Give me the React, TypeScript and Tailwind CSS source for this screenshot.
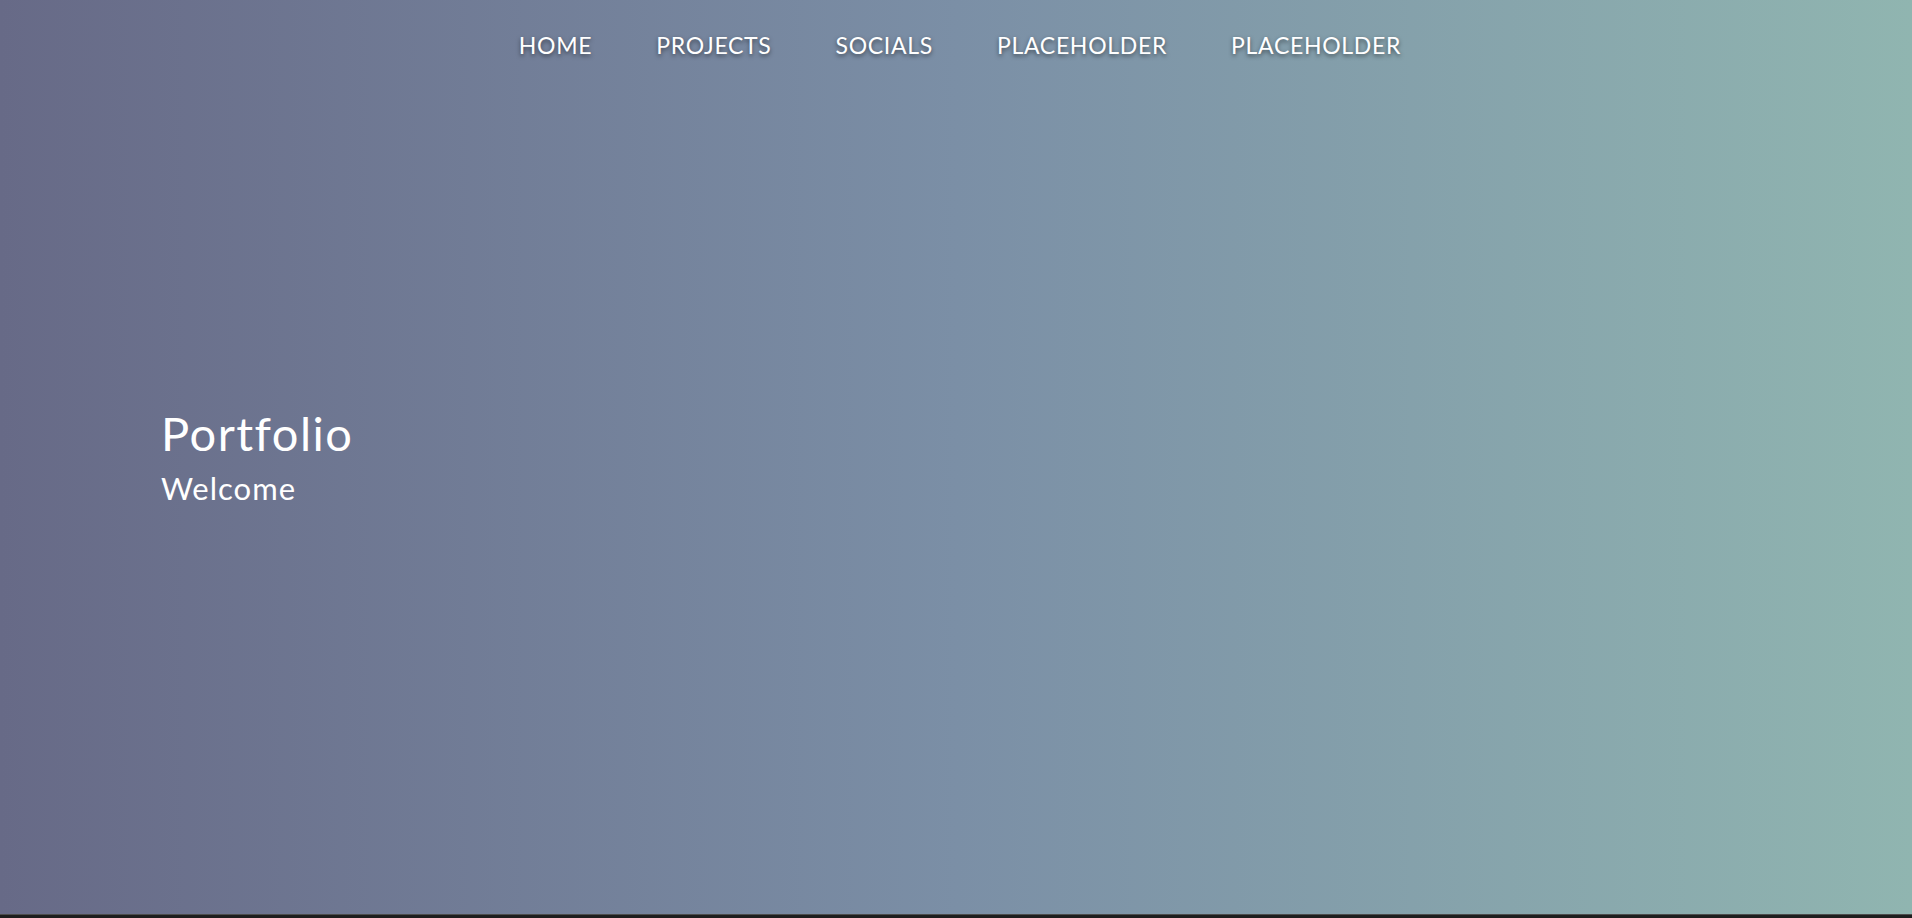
import React from "react";

const items = ["HOME", "PROJECTS", "SOCIALS", "PLACEHOLDER", "PLACEHOLDER"];

export default function App() {
  return (
    <div className="w-full h-[918px] bg-[#1e1e1e] overflow-hidden" style={{ fontFamily: "Lato, 'Noto Sans', sans-serif" }}>
      <div className="h-[915px] w-full bg-gradient-to-r from-[#676a87] via-[#7b8fa6] to-[#90b5b0] flex flex-col border-b border-[#4d4d4d]">
        <nav className="flex justify-center items-center gap-[64px] pt-[33px] pl-[8px]">
          {items.map((t, i) => (
            <a key={i} className="text-white text-[23px] leading-[24px] tracking-[0.7px] [text-shadow:0_2px_4px_rgba(0,0,0,0.5)]">
              {t}
            </a>
          ))}
        </nav>
        <div className="pl-[161px] pt-[350px] text-white">
          <h1 className="text-[47px] leading-[52px] tracking-[1.5px]">Portfolio</h1>
          <p className="text-[31px] leading-[36px] mt-[11px] tracking-[1px]">Welcome</p>
        </div>
      </div>
    </div>
  );
}
